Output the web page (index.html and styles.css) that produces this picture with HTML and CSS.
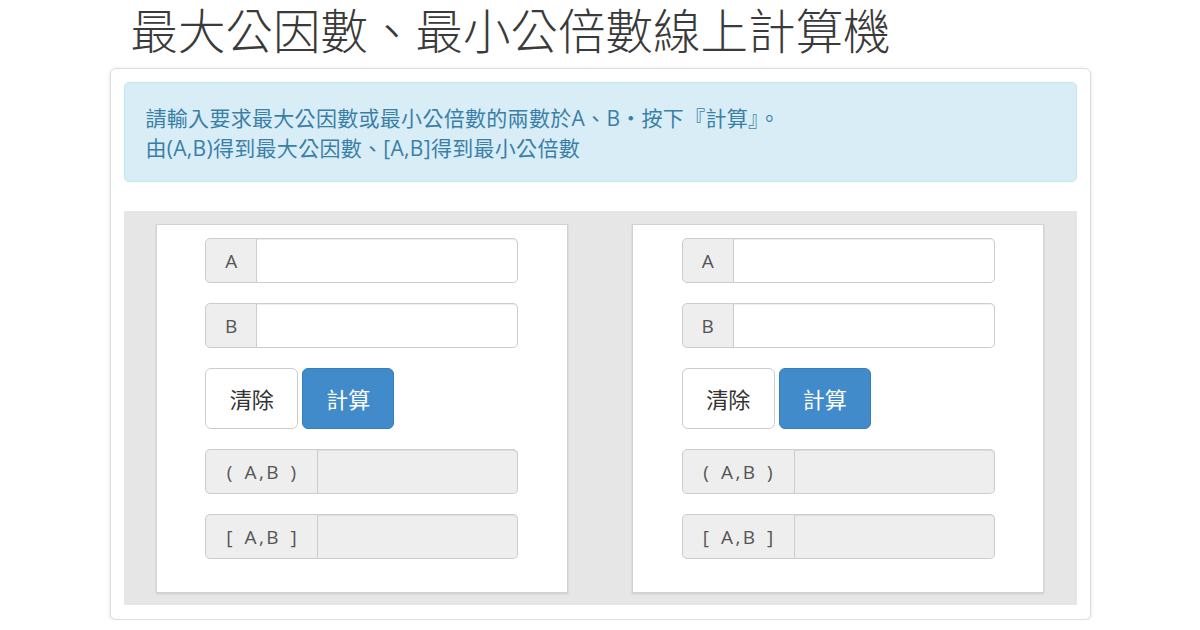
FILE: index.html
```html
<!DOCTYPE html>
<html lang="zh-Hant">
<head>
    <meta charset="UTF-8">
    <meta name="viewport" content="width=device-width, initial-scale=1.0">
    <title>最大公因數、最小公倍數線上計算機</title>
    <link rel="stylesheet" href="styles.css">
</head>
<body>
    <div class="container">
        <h1>最大公因數、最小公倍數線上計算機</h1>

        <div class="card">
            <div class="alert">
                請輸入要求最大公因數或最小公倍數的兩數於A、B‧按下『計算』。<br>
                由(A,B)得到最大公因數、[A,B]得到最小公倍數
            </div>

            <div class="calc-area">
                <div class="calc-col">
                    <div class="panel">
                        <div class="input-group">
                            <span class="addon">A</span>
                            <input type="number" class="field" id="a1">
                        </div>
                        <div class="input-group">
                            <span class="addon">B</span>
                            <input type="number" class="field" id="b1">
                        </div>
                        <div class="btn-row">
                            <button class="btn btn-default" onclick="clearAll(1)">清除</button>
                            <button class="btn btn-primary" onclick="calc(1)">計算</button>
                        </div>
                        <div class="input-group">
                            <span class="addon wide">( A,B )</span>
                            <input type="text" class="field" id="gcd1" disabled>
                        </div>
                        <div class="input-group">
                            <span class="addon wide">[ A,B ]</span>
                            <input type="text" class="field" id="lcm1" disabled>
                        </div>
                    </div>
                </div>
                <div class="calc-col">
                    <div class="panel">
                        <div class="input-group">
                            <span class="addon">A</span>
                            <input type="number" class="field" id="a2">
                        </div>
                        <div class="input-group">
                            <span class="addon">B</span>
                            <input type="number" class="field" id="b2">
                        </div>
                        <div class="btn-row">
                            <button class="btn btn-default" onclick="clearAll(2)">清除</button>
                            <button class="btn btn-primary" onclick="calc(2)">計算</button>
                        </div>
                        <div class="input-group">
                            <span class="addon wide">( A,B )</span>
                            <input type="text" class="field" id="gcd2" disabled>
                        </div>
                        <div class="input-group">
                            <span class="addon wide">[ A,B ]</span>
                            <input type="text" class="field" id="lcm2" disabled>
                        </div>
                    </div>
                </div>
            </div>
        </div>
    </div>

    <script>
        function gcd(a, b) {
            while (b) {
                [a, b] = [b, a % b];
            }
            return Math.abs(a);
        }

        function calc(n) {
            const a = parseInt(document.getElementById('a' + n).value);
            const b = parseInt(document.getElementById('b' + n).value);
            if (isNaN(a) || isNaN(b)) return;
            const g = gcd(a, b);
            document.getElementById('gcd' + n).value = g;
            document.getElementById('lcm' + n).value = g ? Math.abs(a * b) / g : 0;
        }

        function clearAll(n) {
            ['a', 'b', 'gcd', 'lcm'].forEach(id => {
                document.getElementById(id + n).value = '';
            });
        }
    </script>
</body>
</html>
```

FILE: styles.css
```css
body {
    font-family: "Open Sans", "Noto Sans CJK TC", sans-serif;
    margin: 0;
    background-color: #fff;
    color: #333;
}
.container {
    width: 981px;
    margin: 0 auto;
}
h1 {
    margin: 0 0 6px;
    padding-left: 21px;
    font-size: 47.5px;
    font-weight: 300;
    line-height: 62px;
    color: #3a3a3a;
}
.card {
    box-sizing: border-box;
    border: 1px solid #ddd;
    border-radius: 6px;
    box-shadow: 0 1px 4px rgba(0, 0, 0, 0.12);
    padding: 13px 13px 14px;
}
.alert {
    background-color: #d9edf7;
    border: 1px solid #bce8f1;
    border-radius: 5px;
    color: #3a7fa8;
    font-size: 21px;
    letter-spacing: 0.3px;
    line-height: 30px;
    padding: 20px 21px 18px;
    margin-bottom: 29px;
}
.calc-area {
    background-color: #e6e6e6;
    display: grid;
    grid-template-columns: 1fr 1fr;
    padding: 13px 0 12px;
}
.calc-col {
    display: flex;
    justify-content: center;
}
.panel {
    box-sizing: border-box;
    width: 412px;
    background-color: #fff;
    border: 1px solid #d2d2d2;
    box-shadow: 0 1px 2px rgba(0, 0, 0, 0.12);
    padding: 13px 0 33px;
    display: flex;
    flex-direction: column;
    align-items: center;
    gap: 20px;
}
.input-group {
    display: flex;
    width: 313px;
    height: 45px;
}
.addon {
    box-sizing: border-box;
    width: 52px;
    display: flex;
    align-items: center;
    justify-content: center;
    background-color: #eee;
    border: 1px solid #ccc;
    border-radius: 5px 0 0 5px;
    color: #555;
    font-size: 19px;
}
.addon.wide {
    width: 113px;
    letter-spacing: 2.5px;
    word-spacing: 2px;
    padding-left: 2px;
}
.field {
    box-sizing: border-box;
    flex: 1;
    min-width: 0;
    height: 45px;
    margin: 0;
    border: 1px solid #ccc;
    border-left: none;
    border-radius: 0 5px 5px 0;
    box-shadow: inset 0 1px 1px rgba(0, 0, 0, 0.075);
    padding: 0 12px;
    font-size: 18px;
    font-family: inherit;
    color: #555;
    background-color: #fff;
}
.field:disabled {
    background-color: #eee;
}
.btn-row {
    display: flex;
    gap: 4px;
    width: 313px;
}
.btn {
    box-sizing: border-box;
    height: 61px;
    border-radius: 6px;
    border: 1px solid #ccc;
    font-size: 22px;
    font-family: inherit;
    cursor: pointer;
    padding: 0 0 2px;
}
.btn-default {
    width: 93px;
    background-color: #fff;
    color: #333;
}
.btn-primary {
    width: 92px;
    background-color: #428bca;
    border-color: #357ebd;
    color: #fff;
}
```
